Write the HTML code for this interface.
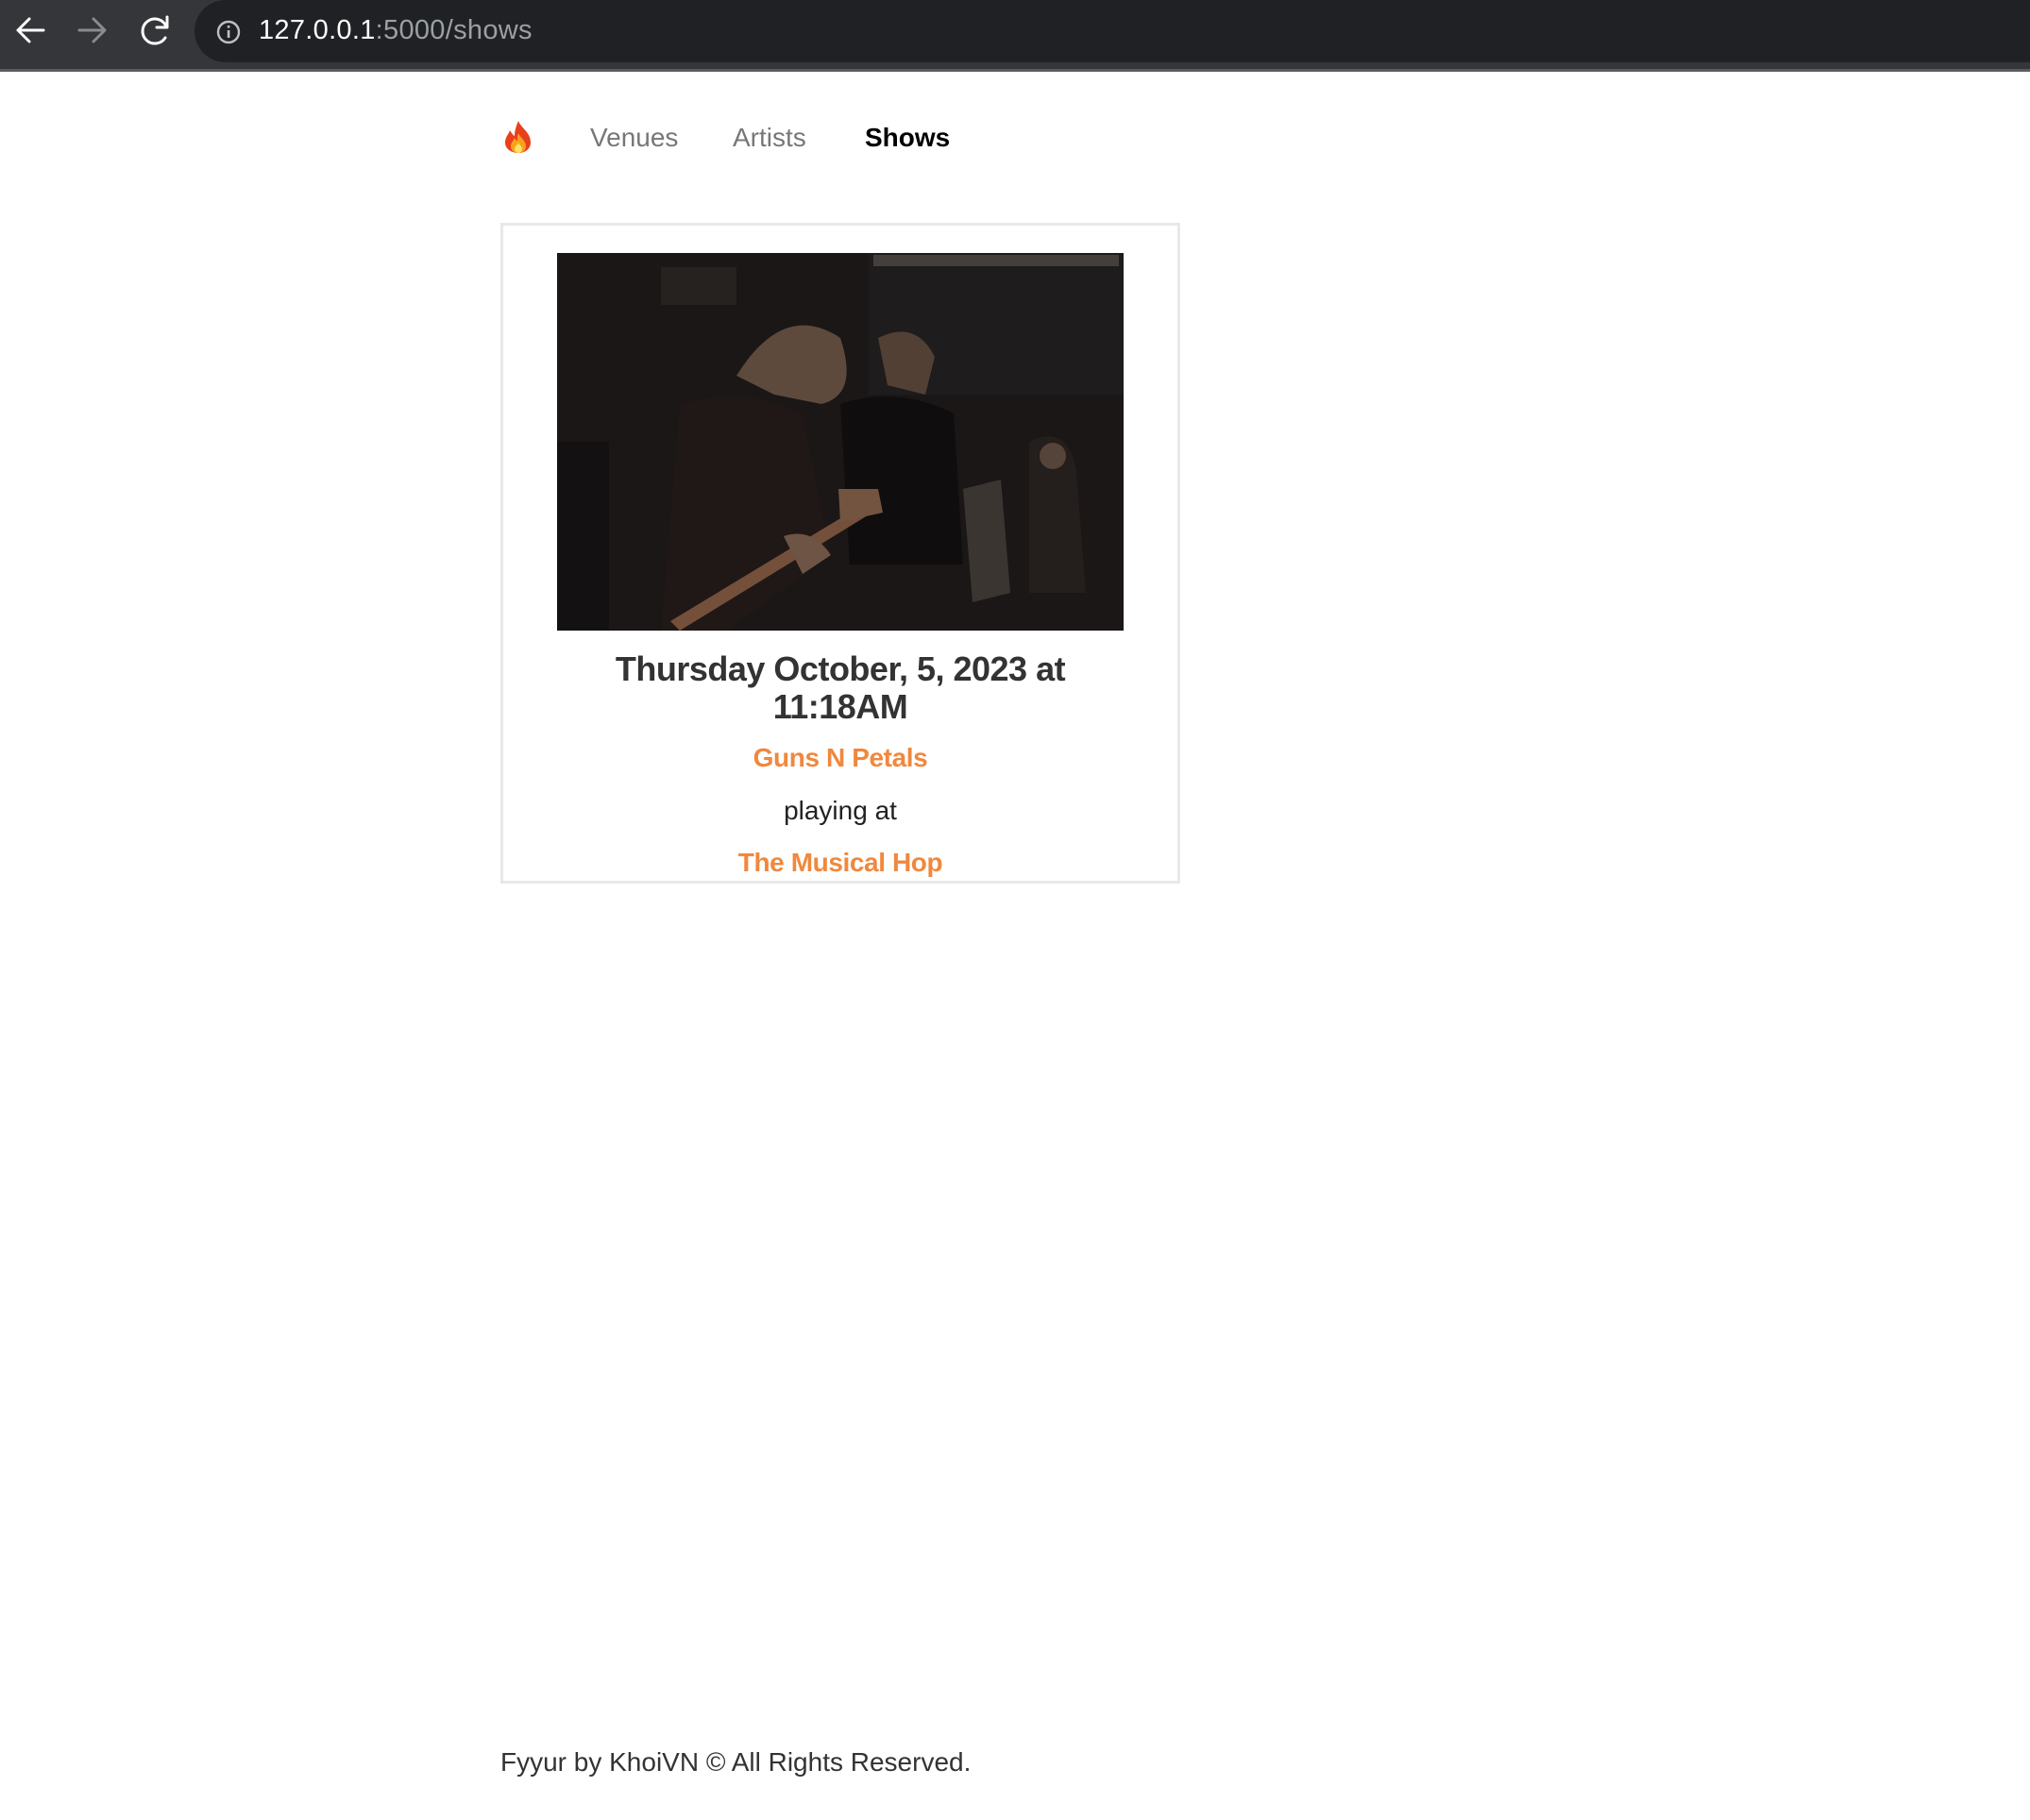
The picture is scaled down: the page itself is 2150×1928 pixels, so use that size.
<!DOCTYPE html>
<html><head><meta charset="utf-8"><style>
*{margin:0;padding:0;box-sizing:border-box}
html,body{width:2150px;height:1928px;background:#fff;overflow:hidden;font-family:"Liberation Sans",Arial,sans-serif}
.bar{position:absolute;left:0;top:0;width:2150px;height:73px;background:#35363a}
.url{position:absolute;left:206px;top:0;width:1944px;height:66px;background:#202124;border-radius:33px 0 0 33px}
.line{position:absolute;left:0;top:73px;width:2150px;height:3px;background:#5a5b5e}
.urltext{position:absolute;left:274px;top:16px;font-size:29px;color:#fff;letter-spacing:0.3px}
.urltext span{color:#9aa0a6}
.nav{position:absolute;top:130px;font-size:28px;color:#777}
.card{position:absolute;left:530px;top:236px;width:720px;height:700px;border:3px solid #e8e8e8}
.img{position:absolute;left:590px;top:268px;width:600px;height:400px;background:#1b1817;overflow:hidden}
.c{position:absolute;left:530px;width:720px;text-align:center}
.date{top:689px;font-size:36px;line-height:40px;color:#333;font-weight:bold;letter-spacing:-0.5px}
.or{color:#f0883e;font-size:28px;font-weight:bold;letter-spacing:-0.4px}
.foot{position:absolute;left:530px;top:1851px;font-size:28px;color:#333}
</style></head><body>
<div class="bar"></div><div class="url"></div><div class="line"></div>
<svg style="position:absolute;left:0;top:0" width="200" height="66">
<g fill="none" stroke="#fff" stroke-width="3" stroke-linecap="round" stroke-linejoin="round">
<path d="M46 32H20M31 20L19 32L31 44"/>
<path d="M84 32h26M99 20l12 12-12 12" stroke="#8a8b8e"/>
<path d="M176 28a13 13 0 1 0 -1 12M177 18v11h-11"/>
</g></svg>
<svg style="position:absolute;left:228px;top:20px" width="28" height="28"><circle cx="14" cy="14" r="11" fill="none" stroke="#bdc1c6" stroke-width="2.4"/><rect x="12.8" y="12" width="2.6" height="8" fill="#bdc1c6"/><rect x="12.8" y="7" width="2.6" height="2.6" fill="#bdc1c6"/></svg>
<div class="urltext">127.0.0.1<span>:5000/shows</span></div>
<svg style="position:absolute;left:532px;top:127px" width="34" height="36" viewBox="0 0 34 36"><path d="M17 1C20 9 30 13 30 24c0 7-6 11-13 11S3 31 3 24c0-6 4-9 5-13 2 3 3 5 5 6 0-6 2-11 4-16z" fill="#e8401c"/><path d="M17 14c2 5 8 8 8 14 0 4-3 7-8 7s-8-3-8-7c0-4 3-6 4-9 1 2 2 3 3 3 0-3 0-5 1-8z" fill="#f7a21b"/><path d="M17 24c1 3 4 4 4 7 0 2-2 4-4 4s-4-2-4-4c0-3 3-4 4-7z" fill="#fde26a"/></svg>
<div class="nav" style="left:625px">Venues</div>
<div class="nav" style="left:776px">Artists</div>
<div class="nav" style="left:916px;color:#000;font-weight:bold">Shows</div>
<div class="card"></div>
<div class="img"><svg width="600" height="400" viewBox="0 0 600 400">
<rect width="600" height="400" fill="#1a1716"/>
<rect x="330" y="0" width="270" height="150" fill="#1e1c1c"/>
<rect x="335" y="2" width="260" height="12" fill="#5d5650" opacity=".6"/>
<rect x="110" y="15" width="80" height="40" fill="#2e2a27" opacity=".6"/>
<rect x="0" y="200" width="55" height="200" fill="#131111"/>
<path d="M190 130 Q240 50 300 90 Q320 150 280 160 L230 150 Z" fill="#5e4a3d"/>
<path d="M130 160 Q200 140 260 170 L290 320 L180 400 L110 400 Z" fill="#1f1816"/>
<path d="M340 90 Q380 70 400 110 L390 150 L350 140 Z" fill="#524035"/>
<path d="M300 160 Q360 140 420 170 L430 330 L310 330 Z" fill="#0f0d0d"/>
<path d="M120 390 L335 260 L342 270 L130 400 Z" fill="#74503a"/>
<path d="M298 250 L340 250 L345 275 L300 285 Z" fill="#735440"/>
<path d="M240 300 Q270 290 290 320 L260 340 Z" fill="#6e5444"/>
<path d="M430 250 L470 240 L480 360 L440 370 Z" fill="#4a433f" opacity=".7"/>
<path d="M500 200 Q540 180 550 230 L560 360 L500 360 Z" fill="#241e1c"/>
<ellipse cx="525" cy="215" rx="14" ry="14" fill="#55443a"/>
</svg></div>
<div class="c date">Thursday October, 5, 2023 at<br>11:18AM</div>
<div class="c or" style="top:787px">Guns N Petals</div>
<div class="c" style="top:843px;font-size:28px;color:#222">playing at</div>
<div class="c or" style="top:898px">The Musical Hop</div>
<div class="foot">Fyyur by KhoiVN © All Rights Reserved.</div>
</body></html>
